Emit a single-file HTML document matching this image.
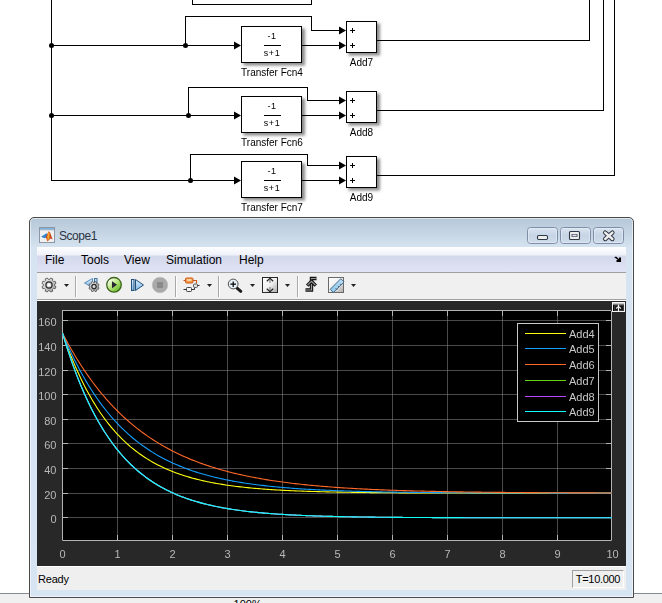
<!DOCTYPE html>
<html><head><meta charset="utf-8"><style>
html,body{margin:0;padding:0;width:662px;height:603px;overflow:hidden;background:#fff;font-family:"Liberation Sans",sans-serif;position:relative}
.a{position:absolute}
.m{position:absolute;top:253px;font-size:12px;line-height:14px;color:#000;white-space:pre}
</style></head><body>
<svg width="662" height="217" style="position:absolute;left:0;top:0;will-change:transform">
<defs><filter id="sh" x="-20%" y="-20%" width="150%" height="150%"><feGaussianBlur stdDeviation="1.8"/></filter></defs>
<rect x="243.5" y="28.5" width="61.5" height="37" fill="#8a8a8a" filter="url(#sh)"/><rect x="243.5" y="98.5" width="61.5" height="37" fill="#8a8a8a" filter="url(#sh)"/><rect x="243.5" y="163.5" width="61.5" height="37" fill="#8a8a8a" filter="url(#sh)"/><rect x="348.5" y="23.5" width="31.5" height="32" fill="#8a8a8a" filter="url(#sh)"/><rect x="348.5" y="93.5" width="31.5" height="32" fill="#8a8a8a" filter="url(#sh)"/><rect x="348.5" y="158.5" width="31.5" height="32" fill="#8a8a8a" filter="url(#sh)"/>
<g stroke="#000" stroke-width="1" shape-rendering="crispEdges"><line x1="51.5" y1="0" x2="51.5" y2="181"/><line x1="51" y1="45.5" x2="235" y2="45.5"/><line x1="185.5" y1="16" x2="185.5" y2="45"/><line x1="185" y1="16.5" x2="312" y2="16.5"/><line x1="311.5" y1="16" x2="311.5" y2="31"/><line x1="311" y1="30.5" x2="340" y2="30.5"/><line x1="301" y1="45.5" x2="340" y2="45.5"/><line x1="376" y1="40.5" x2="590" y2="40.5"/><line x1="589.5" y1="0" x2="589.5" y2="41"/><line x1="51" y1="115.5" x2="235" y2="115.5"/><line x1="188.5" y1="87" x2="188.5" y2="115"/><line x1="188" y1="87.5" x2="308" y2="87.5"/><line x1="307.5" y1="87" x2="307.5" y2="101"/><line x1="307" y1="100.5" x2="340" y2="100.5"/><line x1="301" y1="115.5" x2="340" y2="115.5"/><line x1="376" y1="110.5" x2="604" y2="110.5"/><line x1="603.5" y1="0" x2="603.5" y2="111"/><line x1="51" y1="180.5" x2="235" y2="180.5"/><line x1="190.5" y1="154" x2="190.5" y2="180"/><line x1="190" y1="154.5" x2="308" y2="154.5"/><line x1="307.5" y1="154" x2="307.5" y2="166"/><line x1="307" y1="165.5" x2="340" y2="165.5"/><line x1="301" y1="180.5" x2="340" y2="180.5"/><line x1="376" y1="175.5" x2="615" y2="175.5"/><line x1="614.5" y1="0" x2="614.5" y2="176"/></g>
<path d="M234 41.5 L241 45.5 L234 49.5 Z" fill="#000"/><path d="M339 26.5 L346 30.5 L339 34.5 Z" fill="#000"/><path d="M339 41.5 L346 45.5 L339 49.5 Z" fill="#000"/><circle cx="185.5" cy="45.5" r="2.5" fill="#000"/><path d="M234 111.5 L241 115.5 L234 119.5 Z" fill="#000"/><path d="M339 96.5 L346 100.5 L339 104.5 Z" fill="#000"/><path d="M339 111.5 L346 115.5 L339 119.5 Z" fill="#000"/><circle cx="188.5" cy="115.5" r="2.5" fill="#000"/><circle cx="51.5" cy="115.5" r="2.5" fill="#000"/><path d="M234 176.5 L241 180.5 L234 184.5 Z" fill="#000"/><path d="M339 161.5 L346 165.5 L339 169.5 Z" fill="#000"/><path d="M339 176.5 L346 180.5 L339 184.5 Z" fill="#000"/><circle cx="190.5" cy="180.5" r="2.5" fill="#000"/><circle cx="51.5" cy="45.5" r="2.5" fill="#000"/><rect x="192.5" y="-10" width="119" height="14.5" fill="none" stroke="#000"/>
<g font-family="Liberation Sans" fill="#000">
<rect x="241.5" y="26.5" width="60" height="36" fill="#fff" stroke="#000" stroke-width="1"/>
<text x="272" y="39.2" text-anchor="middle" font-size="9" letter-spacing="0.6">-1</text>
<line x1="264" y1="45.5" x2="281" y2="45.5" stroke="#000"/>
<text x="272" y="56.2" text-anchor="middle" font-size="9" letter-spacing="0.6">s+1</text>
<text x="272" y="76" text-anchor="middle" font-size="10">Transfer Fcn4</text>
<rect x="241.5" y="96.5" width="60" height="36" fill="#fff" stroke="#000" stroke-width="1"/>
<text x="272" y="109.2" text-anchor="middle" font-size="9" letter-spacing="0.6">-1</text>
<line x1="264" y1="115.5" x2="281" y2="115.5" stroke="#000"/>
<text x="272" y="126.2" text-anchor="middle" font-size="9" letter-spacing="0.6">s+1</text>
<text x="272" y="146" text-anchor="middle" font-size="10">Transfer Fcn6</text>
<rect x="241.5" y="161.5" width="60" height="36" fill="#fff" stroke="#000" stroke-width="1"/>
<text x="272" y="174.2" text-anchor="middle" font-size="9" letter-spacing="0.6">-1</text>
<line x1="264" y1="180.5" x2="281" y2="180.5" stroke="#000"/>
<text x="272" y="191.2" text-anchor="middle" font-size="9" letter-spacing="0.6">s+1</text>
<text x="272" y="211" text-anchor="middle" font-size="10">Transfer Fcn7</text>
<rect x="346.5" y="21.5" width="30" height="31" fill="#fff" stroke="#000" stroke-width="1"/>
<path d="M350 30.5 H355 M352.5 28 V33 M350 45.5 H355 M352.5 43 V48" stroke="#000" stroke-width="1"/>
<text x="361.5" y="65.5" text-anchor="middle" font-size="10">Add7</text>
<rect x="346.5" y="91.5" width="30" height="31" fill="#fff" stroke="#000" stroke-width="1"/>
<path d="M350 100.5 H355 M352.5 98 V103 M350 115.5 H355 M352.5 113 V118" stroke="#000" stroke-width="1"/>
<text x="361.5" y="135.5" text-anchor="middle" font-size="10">Add8</text>
<rect x="346.5" y="156.5" width="30" height="31" fill="#fff" stroke="#000" stroke-width="1"/>
<path d="M350 165.5 H355 M352.5 163 V168 M350 180.5 H355 M352.5 178 V183" stroke="#000" stroke-width="1"/>
<text x="361.5" y="200.5" text-anchor="middle" font-size="10">Add9</text></g>
</svg>
<div class="a" style="left:0;top:593px;width:662px;height:10px;background:#f0f0f0;border-top:1px solid #838a96;box-sizing:border-box"></div>
<div class="a" style="left:233.6px;top:598.4px;font-size:11px;line-height:12px;color:#000">100%</div>
<div class="a" style="left:29px;top:217px;width:605px;height:381px;box-sizing:border-box;border:1px solid #4a4a4a;border-radius:5px 5px 0 0;background:linear-gradient(#b6c8d9 1px,#c6d5e3 15px,#d6e4f1 30px,#d7e4f2);box-shadow:inset 0 0 0 1px rgba(255,255,255,0.55)"></div>
<div class="a" style="left:59px;top:228.4px;font-size:12px;line-height:16px;color:#2a3445;letter-spacing:-0.45px">Scope1</div>
<div class="a" style="left:37px;top:247px;width:589px;height:25px;background:linear-gradient(#fdfeff 0,#f0f2f9 8px,#d4d8eb 9px,#dfe3f4)"></div>
<div class="a" style="left:37px;top:272px;width:589px;height:1px;background:#a0a0a0"></div>
<div class="a" style="left:37px;top:273px;width:589px;height:26px;background:#f0f0f0"></div>
<div class="a" style="left:37px;top:299px;width:589px;height:1px;background:#a0a0a0"></div><div class="a" style="left:37px;top:300px;width:589px;height:1px;background:#fff"></div>
<div class="a" style="left:37px;top:566px;width:589px;height:24px;background:#efefef;border-top:1px solid #fff;box-sizing:border-box"></div>
<div class="a" style="left:38px;top:573px;font-size:11px;line-height:13px;color:#000;letter-spacing:-0.2px">Ready</div>
<div class="a" style="left:572px;top:570px;width:52px;height:18px;box-sizing:border-box;border:1px solid #fff;border-top-color:#a0a0a0;border-left-color:#a0a0a0;background:#efefef;font-size:11px;line-height:16px;text-align:center;color:#000;letter-spacing:-0.3px">T=10.000</div>
<div class="m" style="left:45px">File</div>
<div class="m" style="left:81px">Tools</div>
<div class="m" style="left:124px">View</div>
<div class="m" style="left:166px">Simulation</div>
<div class="m" style="left:239px">Help</div>
<svg width="662" height="603" style="position:absolute;left:0;top:0">
<defs>
<linearGradient id="gearg" x1="0" y1="0" x2="1" y2="1"><stop offset="0" stop-color="#f4f4f4"/><stop offset="1" stop-color="#9a9a9a"/></linearGradient>
<linearGradient id="playg" x1="0.15" y1="0.1" x2="0.85" y2="0.9"><stop offset="0" stop-color="#ffffff"/><stop offset="0.5" stop-color="#b6e57a"/><stop offset="1" stop-color="#62b82a"/></linearGradient>
<linearGradient id="bluef" x1="0" y1="0" x2="0" y2="1"><stop offset="0" stop-color="#d8ecfb"/><stop offset="1" stop-color="#7fb6e4"/></linearGradient>
<linearGradient id="boxg" x1="0" y1="0" x2="1" y2="1"><stop offset="0" stop-color="#ffffff"/><stop offset="0.5" stop-color="#f0f0f0"/><stop offset="1" stop-color="#a8a8a8"/></linearGradient>
<linearGradient id="tbbtn" x1="0" y1="0" x2="0" y2="1"><stop offset="0" stop-color="#dbe5f1"/><stop offset="0.5" stop-color="#c6d4e5"/><stop offset="1" stop-color="#cfdcea"/></linearGradient>
<linearGradient id="rulg" x1="0" y1="0" x2="1" y2="0"><stop offset="0" stop-color="#8cc6ec"/><stop offset="1" stop-color="#bfe0f6"/></linearGradient>
</defs>
<!-- title bar buttons -->
<rect x="527.5" y="227.5" width="30" height="16" rx="3" fill="url(#tbbtn)" stroke="#7f8ea8" stroke-width="1"/>
<rect x="528.5" y="228.5" width="28" height="14" rx="2" fill="none" stroke="#e6eef7" stroke-width="0.8" opacity="0.8"/>
<rect x="537.5" y="235.5" width="10" height="4" rx="1.2" fill="#eeeeee" stroke="#2f3645" stroke-width="1.1"/>
<rect x="560.5" y="227.5" width="30" height="16" rx="3" fill="url(#tbbtn)" stroke="#7f8ea8" stroke-width="1"/>
<rect x="561.5" y="228.5" width="28" height="14" rx="2" fill="none" stroke="#e6eef7" stroke-width="0.8" opacity="0.8"/>
<rect x="569.5" y="231.5" width="10" height="8" rx="1" fill="#eeeeee" stroke="#2f3645" stroke-width="1.1"/>
<rect x="571.5" y="234" width="6" height="3" fill="#55607a"/>
<rect x="572.5" y="234.8" width="4" height="1.4" fill="#e8e8e8"/>
<rect x="593.5" y="227.5" width="30" height="16" rx="3" fill="url(#tbbtn)" stroke="#7f8ea8" stroke-width="1"/>
<rect x="594.5" y="228.5" width="28" height="14" rx="2" fill="none" stroke="#e6eef7" stroke-width="0.8" opacity="0.8"/>
<path d="M605.2 232.6 L612.4 239 M612.4 232.6 L605.2 239" stroke="#2f3645" stroke-width="4.4" stroke-linecap="round"/>
<path d="M605.2 232.6 L612.4 239 M612.4 232.6 L605.2 239" stroke="#eeeeee" stroke-width="2.4" stroke-linecap="round"/>
<!-- matlab icon -->
<rect x="39.5" y="227.5" width="15" height="15" fill="#f0f0f0" stroke="#8d97a3" stroke-width="1"/>
<rect x="40" y="228" width="14" height="1.6" fill="#7db4e6"/>
<rect x="40" y="229.6" width="14" height="0.6" fill="#8d97a3"/>
<path d="M41 236.8 L46.5 233.2 L48.8 236.5 L44.5 238.3 Z" fill="#3583cc"/>
<path d="M45.8 237 L48.6 231.2 L50.2 232.8 L52.6 239.6 L50.6 238.6 L47.4 241.4 Z" fill="#c9431d"/>
<path d="M48.4 231.6 L49.6 233.4 L49.4 238.2 L47.6 241 L47.2 236.6 Z" fill="#f4a827"/>
<!-- menubar arrow -->
<path d="M614 257.5 L616 256.5 L619 259 L619 257.5 L621 257.5 L621 262 L616.5 262 L616.5 260 L618 260 L615 257.8 Z" fill="#000"/>
<!-- toolbar -->
<polygon points="54.70,285.81 56.00,286.68 55.14,288.76 53.61,288.46 52.46,289.61 52.76,291.14 50.68,292.00 49.81,290.70 48.19,290.70 47.32,292.00 45.24,291.14 45.54,289.61 44.39,288.46 42.86,288.76 42.00,286.68 43.30,285.81 43.30,284.19 42.00,283.32 42.86,281.24 44.39,281.54 45.54,280.39 45.24,278.86 47.32,278.00 48.19,279.30 49.81,279.30 50.68,278.00 52.76,278.86 52.46,280.39 53.61,281.54 55.14,281.24 56.00,283.32 54.70,284.19" fill="url(#gearg)" stroke="#4a4a4a" stroke-width="0.8" stroke-linejoin="round"/><circle cx="49" cy="285" r="3.1" fill="none" stroke="#2a2a2a" stroke-width="1.2"/><circle cx="49" cy="285" r="1.7" fill="#fff"/>
<path d="M64 284 H69 L66.5 287 Z" fill="#222"/>
<rect x="75" y="276" width="1" height="21" fill="#a8a8a8"/><rect x="76" y="276" width="1" height="21" fill="#fff"/>
<path d="M84.5 283 L92.5 278.5 L92.5 287.5 Z" fill="url(#bluef)" stroke="#5d8fc0" stroke-width="1"/>
<rect x="94.5" y="278.5" width="2.5" height="6" fill="url(#bluef)" stroke="#3d6f9f" stroke-width="1"/>
<polygon points="98.12,287.19 99.06,287.81 98.43,289.32 97.33,289.10 96.50,289.93 96.72,291.03 95.21,291.66 94.59,290.72 93.41,290.72 92.79,291.66 91.28,291.03 91.50,289.93 90.67,289.10 89.57,289.32 88.94,287.81 89.88,287.19 89.88,286.01 88.94,285.39 89.57,283.88 90.67,284.10 91.50,283.27 91.28,282.17 92.79,281.54 93.41,282.48 94.59,282.48 95.21,281.54 96.72,282.17 96.50,283.27 97.33,284.10 98.43,283.88 99.06,285.39 98.12,286.01" fill="url(#gearg)" stroke="#4a4a4a" stroke-width="0.8" stroke-linejoin="round"/><circle cx="94" cy="286.6" r="2.2" fill="none" stroke="#2a2a2a" stroke-width="1.2"/><circle cx="94" cy="286.6" r="1.0" fill="#ddd"/>
<circle cx="114" cy="284.8" r="7.3" fill="url(#playg)" stroke="#3d6419" stroke-width="1.3"/>
<path d="M112 281.3 L117 284.8 L112 288.3 Z" fill="#262630"/>
<rect x="131.5" y="279.5" width="2.5" height="11" fill="url(#bluef)" stroke="#1f4f7a" stroke-width="1"/>
<path d="M135.5 279.5 L143.5 285 L135.5 290.5 Z" fill="url(#bluef)" stroke="#1f4f7a" stroke-width="1"/>
<circle cx="160" cy="285" r="7.8" fill="#a9a9a9" stroke="#bcbcbc" stroke-width="0.6"/>
<rect x="157" y="282" width="6" height="6" fill="#8a8a8a"/>
<rect x="175" y="276" width="1" height="21" fill="#a8a8a8"/><rect x="176" y="276" width="1" height="21" fill="#fff"/>
<path d="M183.5 280.5 H186 M192.5 280.5 H196.5 V283.5" stroke="#c8581a" stroke-width="1.1" fill="none"/>
<rect x="185.5" y="278" width="7.5" height="5" rx="1" fill="#f39a4a" stroke="#cf5a17" stroke-width="1"/>
<rect x="187" y="279" width="4.5" height="2" fill="#fbd2a0"/>
<path d="M183.5 289.5 H186.5 M191.5 289.5 H194.5 V287.5 M197.5 285.5 H199.5" stroke="#333" stroke-width="1" fill="none"/>
<rect x="186.5" y="287.5" width="5" height="4" rx="0.8" fill="#f4f4f4" stroke="#444" stroke-width="1"/>
<rect x="193.5" y="284" width="4" height="3.4" rx="1" fill="#e8e8e8" stroke="#555" stroke-width="1"/>
<path d="M207 284 H212 L209.5 287 Z" fill="#222"/>
<rect x="218" y="276" width="1" height="21" fill="#a8a8a8"/><rect x="219" y="276" width="1" height="21" fill="#fff"/>
<path d="M236.8 287.8 L240.8 291.3" stroke="#1a1a1a" stroke-width="3" stroke-linecap="round"/>
<circle cx="233.2" cy="284" r="4.9" fill="#e8f0f8" stroke="#505050" stroke-width="1"/>
<path d="M230.4 284.2 H236 M233.2 281.4 V287" stroke="#000" stroke-width="1.2"/>
<path d="M250 284 H255 L252.5 287 Z" fill="#222"/>
<rect x="262.5" y="277.5" width="15" height="15" fill="url(#boxg)" stroke="#2a2a2a" stroke-width="1"/>
<path d="M270 279.5 V283" stroke="#9a9a9a" stroke-width="1.6"/><path d="M270 287 V290.5" stroke="#9a9a9a" stroke-width="1.6"/>
<path d="M266.8 281.2 L270 278.4 L273.2 281.2 M266.8 288.8 L270 291.6 L273.2 288.8" stroke="#222" stroke-width="1.2" fill="none"/>
<path d="M285 284 H290 L287.5 287 Z" fill="#222"/>
<rect x="297" y="276" width="1" height="21" fill="#a8a8a8"/><rect x="298" y="276" width="1" height="21" fill="#fff"/>
<path d="M305.5 290 H311.5 V278.5 H316.5" stroke="#111" stroke-width="3.4" fill="none" stroke-linejoin="miter"/>
<path d="M305.5 290 H311.5 V278.5 H316.5" stroke="#9a9a9a" stroke-width="1.2" fill="none"/>
<path d="M307.2 285.6 L311.5 281.3 L315.8 285.6" stroke="#111" stroke-width="3.4" fill="none"/>
<path d="M307.6 285.2 L311.5 281.3 L315.4 285.2" stroke="#9a9a9a" stroke-width="1.2" fill="none"/>
<rect x="328.5" y="277.5" width="15" height="15" fill="url(#boxg)" stroke="#6a6a6a" stroke-width="1"/>
<path d="M330.2 289.3 L340.8 278.7 L344 281.9 L333.4 292.5 Z" fill="url(#rulg)" stroke="#3c5f7d" stroke-width="0.9"/>
<path d="M335.6 288.2 L336.8 289.4 M337.8 286 L339 287.2 M340 283.8 L341.2 285" stroke="#2c4f6d" stroke-width="0.9"/>
<path d="M351 284 H356 L353.5 287 Z" fill="#222"/>
<!-- undock -->
</svg>
<svg width="662" height="603" style="position:absolute;left:0;top:0;will-change:transform">
<rect x="37" y="301" width="589" height="265" fill="#282828"/>
<rect x="62" y="310" width="550" height="231" fill="#000"/>
<g stroke="#848484" stroke-opacity="0.56" stroke-width="1"><line x1="117.5" y1="311" x2="117.5" y2="540" /><line x1="172.5" y1="311" x2="172.5" y2="540" /><line x1="227.5" y1="311" x2="227.5" y2="540" /><line x1="282.5" y1="311" x2="282.5" y2="540" /><line x1="337.5" y1="311" x2="337.5" y2="540" /><line x1="392.5" y1="311" x2="392.5" y2="540" /><line x1="447.5" y1="311" x2="447.5" y2="540" /><line x1="502.5" y1="311" x2="502.5" y2="540" /><line x1="557.5" y1="311" x2="557.5" y2="540" /><line x1="63" y1="517.5" x2="611" y2="517.5" /><line x1="63" y1="493.5" x2="611" y2="493.5" /><line x1="63" y1="468.5" x2="611" y2="468.5" /><line x1="63" y1="443.5" x2="611" y2="443.5" /><line x1="63" y1="419.5" x2="611" y2="419.5" /><line x1="63" y1="394.5" x2="611" y2="394.5" /><line x1="63" y1="370.5" x2="611" y2="370.5" /><line x1="63" y1="345.5" x2="611" y2="345.5" /><line x1="63" y1="320.5" x2="611" y2="320.5" /></g>
<g stroke="#b4b4b4" stroke-width="1"><line x1="117.5" y1="535" x2="117.5" y2="540" /><line x1="117.5" y1="311" x2="117.5" y2="316" /><line x1="172.5" y1="535" x2="172.5" y2="540" /><line x1="172.5" y1="311" x2="172.5" y2="316" /><line x1="227.5" y1="535" x2="227.5" y2="540" /><line x1="227.5" y1="311" x2="227.5" y2="316" /><line x1="282.5" y1="535" x2="282.5" y2="540" /><line x1="282.5" y1="311" x2="282.5" y2="316" /><line x1="337.5" y1="535" x2="337.5" y2="540" /><line x1="337.5" y1="311" x2="337.5" y2="316" /><line x1="392.5" y1="535" x2="392.5" y2="540" /><line x1="392.5" y1="311" x2="392.5" y2="316" /><line x1="447.5" y1="535" x2="447.5" y2="540" /><line x1="447.5" y1="311" x2="447.5" y2="316" /><line x1="502.5" y1="535" x2="502.5" y2="540" /><line x1="502.5" y1="311" x2="502.5" y2="316" /><line x1="557.5" y1="535" x2="557.5" y2="540" /><line x1="557.5" y1="311" x2="557.5" y2="316" /><line x1="63" y1="517.5" x2="68" y2="517.5" /><line x1="606" y1="517.5" x2="611" y2="517.5" /><line x1="63" y1="493.5" x2="68" y2="493.5" /><line x1="606" y1="493.5" x2="611" y2="493.5" /><line x1="63" y1="468.5" x2="68" y2="468.5" /><line x1="606" y1="468.5" x2="611" y2="468.5" /><line x1="63" y1="443.5" x2="68" y2="443.5" /><line x1="606" y1="443.5" x2="611" y2="443.5" /><line x1="63" y1="419.5" x2="68" y2="419.5" /><line x1="606" y1="419.5" x2="611" y2="419.5" /><line x1="63" y1="394.5" x2="68" y2="394.5" /><line x1="606" y1="394.5" x2="611" y2="394.5" /><line x1="63" y1="370.5" x2="68" y2="370.5" /><line x1="606" y1="370.5" x2="611" y2="370.5" /><line x1="63" y1="345.5" x2="68" y2="345.5" /><line x1="606" y1="345.5" x2="611" y2="345.5" /><line x1="63" y1="320.5" x2="68" y2="320.5" /><line x1="606" y1="320.5" x2="611" y2="320.5" /></g>
<path d="M62.5 310 V540.5 H611.5 V311 M62 310.5 H611" fill="none" stroke="#b4b4b4" stroke-width="1"/><rect x="611" y="310" width="1" height="1" fill="#282828"/>
<g font-family="Liberation Sans" font-size="11" fill="#b8b8b8"><text x="56.5" y="523.3" text-anchor="end">0</text><text x="56.5" y="498.7" text-anchor="end">20</text><text x="56.5" y="474.0" text-anchor="end">40</text><text x="56.5" y="449.4" text-anchor="end">60</text><text x="56.5" y="424.8" text-anchor="end">80</text><text x="56.5" y="400.2" text-anchor="end">100</text><text x="56.5" y="375.5" text-anchor="end">120</text><text x="56.5" y="350.9" text-anchor="end">140</text><text x="56.5" y="326.3" text-anchor="end">160</text><text x="62.5" y="558" text-anchor="middle">0</text><text x="117.5" y="558" text-anchor="middle">1</text><text x="172.5" y="558" text-anchor="middle">2</text><text x="227.5" y="558" text-anchor="middle">3</text><text x="282.5" y="558" text-anchor="middle">4</text><text x="337.5" y="558" text-anchor="middle">5</text><text x="392.5" y="558" text-anchor="middle">6</text><text x="447.5" y="558" text-anchor="middle">7</text><text x="502.5" y="558" text-anchor="middle">8</text><text x="557.5" y="558" text-anchor="middle">9</text><text x="612.5" y="558" text-anchor="middle">10</text></g>
<g clip-path="url(#axclip)"><polyline fill="none" stroke="#ffff11" stroke-width="1.1" points="62.50,333.11 64.33,338.36 66.17,343.44 68.00,348.34 69.83,353.09 71.67,357.69 73.50,362.13 75.33,366.42 77.17,370.58 79.00,374.60 80.83,378.49 82.67,382.25 84.50,385.88 86.33,389.40 88.17,392.80 90.00,396.09 91.83,399.27 93.67,402.35 95.50,405.33 97.33,408.21 99.17,411.00 101.00,413.69 102.83,416.30 104.67,418.82 106.50,421.25 108.33,423.61 110.17,425.89 112.00,428.10 113.83,430.23 115.67,432.30 117.50,434.29 119.33,436.22 121.17,438.09 123.00,439.89 124.83,441.64 126.67,443.33 128.50,444.97 130.33,446.55 132.17,448.07 134.00,449.55 135.83,450.98 137.67,452.37 139.50,453.70 141.33,455.00 143.17,456.25 145.00,457.46 146.83,458.63 148.67,459.76 150.50,460.86 152.33,461.92 154.17,462.94 156.00,463.93 157.83,464.89 159.67,465.82 161.50,466.72 163.33,467.58 165.17,468.42 167.00,469.23 168.83,470.02 170.67,470.78 172.50,471.51 174.33,472.22 176.17,472.91 178.00,473.57 179.83,474.22 181.67,474.84 183.50,475.44 185.33,476.02 187.17,476.58 189.00,477.13 190.83,477.65 192.67,478.16 194.50,478.65 196.33,479.13 198.17,479.59 200.00,480.04 201.83,480.47 203.67,480.88 205.50,481.29 207.33,481.68 209.17,482.05 211.00,482.42 212.83,482.77 214.67,483.11 216.50,483.44 218.33,483.76 220.17,484.07 222.00,484.37 223.83,484.66 225.67,484.94 227.50,485.21 229.33,485.47 231.17,485.72 233.00,485.96 234.83,486.20 236.67,486.43 238.50,486.65 240.33,486.86 242.17,487.07 244.00,487.27 245.83,487.46 247.67,487.65 249.50,487.83 251.33,488.01 253.17,488.18 255.00,488.34 256.83,488.50 258.67,488.65 260.50,488.80 262.33,488.94 264.17,489.08 266.00,489.22 267.83,489.35 269.67,489.47 271.50,489.59 273.33,489.71 275.17,489.83 277.00,489.94 278.83,490.04 280.67,490.14 282.50,490.24 284.33,490.34 286.17,490.43 288.00,490.52 289.83,490.61 291.67,490.69 293.50,490.77 295.33,490.85 297.17,490.93 299.00,491.00 300.83,491.07 302.67,491.14 304.50,491.21 306.33,491.27 308.17,491.34 310.00,491.40 311.83,491.46 313.67,491.51 315.50,491.57 317.33,491.62 319.17,491.67 321.00,491.72 322.83,491.77 324.67,491.81 326.50,491.86 328.33,491.90 330.17,491.94 332.00,491.98 333.83,492.02 335.67,492.06 337.50,492.10 339.33,492.13 341.17,492.17 343.00,492.20 344.83,492.23 346.67,492.26 348.50,492.29 350.33,492.32 352.17,492.35 354.00,492.38 355.83,492.40 357.67,492.43 359.50,492.45 361.33,492.48 363.17,492.50 365.00,492.52 366.83,492.54 368.67,492.56 370.50,492.58 372.33,492.60 374.17,492.62 376.00,492.64 377.83,492.66 379.67,492.67 381.50,492.69 383.33,492.71 385.17,492.72 387.00,492.74 388.83,492.75 390.67,492.76 392.50,492.78 394.33,492.79 396.17,492.80 398.00,492.82 399.83,492.83 401.67,492.84 403.50,492.85 405.33,492.86 407.17,492.87 409.00,492.88 410.83,492.89 412.67,492.90 414.50,492.91 416.33,492.92 418.17,492.93 420.00,492.93 421.83,492.94 423.67,492.95 425.50,492.96 427.33,492.96 429.17,492.97 431.00,492.98 432.83,492.98 434.67,492.99 436.50,493.00 438.33,493.00 440.17,493.01 442.00,493.01 443.83,493.02 445.67,493.02 447.50,493.03 449.33,493.03 451.17,493.04 453.00,493.04 454.83,493.05 456.67,493.05 458.50,493.06 460.33,493.06 462.17,493.06 464.00,493.07 465.83,493.07 467.67,493.07 469.50,493.08 471.33,493.08 473.17,493.08 475.00,493.09 476.83,493.09 478.67,493.09 480.50,493.09 482.33,493.10 484.17,493.10 486.00,493.10 487.83,493.10 489.67,493.11 491.50,493.11 493.33,493.11 495.17,493.11 497.00,493.12 498.83,493.12 500.67,493.12 502.50,493.12 504.33,493.12 506.17,493.12 508.00,493.13 509.83,493.13 511.67,493.13 513.50,493.13 515.33,493.13 517.17,493.13 519.00,493.14 520.83,493.14 522.67,493.14 524.50,493.14 526.33,493.14 528.17,493.14 530.00,493.14 531.83,493.14 533.67,493.14 535.50,493.15 537.33,493.15 539.17,493.15 541.00,493.15 542.83,493.15 544.67,493.15 546.50,493.15 548.33,493.15 550.17,493.15 552.00,493.15 553.83,493.15 555.67,493.15 557.50,493.16 559.33,493.16 561.17,493.16 563.00,493.16 564.83,493.16 566.67,493.16 568.50,493.16 570.33,493.16 572.17,493.16 574.00,493.16 575.83,493.16 577.67,493.16 579.50,493.16 581.33,493.16 583.17,493.16 585.00,493.16 586.83,493.16 588.67,493.16 590.50,493.16 592.33,493.16 594.17,493.16 596.00,493.17 597.83,493.17 599.67,493.17 601.50,493.17 603.33,493.17 605.17,493.17 607.00,493.17 608.83,493.17 610.67,493.17 612.50,493.17"/>
<polyline fill="none" stroke="#139fff" stroke-width="1.1" points="62.50,333.11 64.33,337.50 66.17,341.76 68.00,345.91 69.83,349.94 71.67,353.87 73.50,357.69 75.33,361.40 77.17,365.01 79.00,368.52 80.83,371.93 82.67,375.25 84.50,378.49 86.33,381.63 88.17,384.68 90.00,387.66 91.83,390.55 93.67,393.36 95.50,396.09 97.33,398.75 99.17,401.34 101.00,403.85 102.83,406.30 104.67,408.68 106.50,411.00 108.33,413.25 110.17,415.44 112.00,417.57 113.83,419.64 115.67,421.65 117.50,423.61 119.33,425.52 121.17,427.37 123.00,429.17 124.83,430.93 126.67,432.63 128.50,434.29 130.33,435.90 132.17,437.47 134.00,439.00 135.83,440.48 137.67,441.93 139.50,443.33 141.33,444.70 143.17,446.02 145.00,447.32 146.83,448.57 148.67,449.79 150.50,450.98 152.33,452.14 154.17,453.26 156.00,454.36 157.83,455.42 159.67,456.45 161.50,457.46 163.33,458.44 165.17,459.39 167.00,460.32 168.83,461.22 170.67,462.09 172.50,462.94 174.33,463.77 176.17,464.58 178.00,465.36 179.83,466.12 181.67,466.86 183.50,467.58 185.33,468.29 187.17,468.97 189.00,469.63 190.83,470.28 192.67,470.90 194.50,471.51 196.33,472.11 198.17,472.68 200.00,473.24 201.83,473.79 203.67,474.32 205.50,474.84 207.33,475.34 209.17,475.83 211.00,476.30 212.83,476.77 214.67,477.22 216.50,477.65 218.33,478.08 220.17,478.49 222.00,478.89 223.83,479.29 225.67,479.67 227.50,480.04 229.33,480.40 231.17,480.75 233.00,481.09 234.83,481.42 236.67,481.74 238.50,482.05 240.33,482.36 242.17,482.65 244.00,482.94 245.83,483.22 247.67,483.50 249.50,483.76 251.33,484.02 253.17,484.27 255.00,484.51 256.83,484.75 258.67,484.98 260.50,485.21 262.33,485.42 264.17,485.64 266.00,485.84 267.83,486.04 269.67,486.24 271.50,486.43 273.33,486.61 275.17,486.79 277.00,486.97 278.83,487.14 280.67,487.30 282.50,487.46 284.33,487.62 286.17,487.77 288.00,487.92 289.83,488.07 291.67,488.21 293.50,488.34 295.33,488.47 297.17,488.60 299.00,488.73 300.83,488.85 302.67,488.97 304.50,489.08 306.33,489.20 308.17,489.30 310.00,489.41 311.83,489.51 313.67,489.61 315.50,489.71 317.33,489.81 319.17,489.90 321.00,489.99 322.83,490.08 324.67,490.16 326.50,490.24 328.33,490.32 330.17,490.40 332.00,490.48 333.83,490.55 335.67,490.62 337.50,490.69 339.33,490.76 341.17,490.83 343.00,490.89 344.83,490.95 346.67,491.02 348.50,491.07 350.33,491.13 352.17,491.19 354.00,491.24 355.83,491.30 357.67,491.35 359.50,491.40 361.33,491.45 363.17,491.49 365.00,491.54 366.83,491.58 368.67,491.63 370.50,491.67 372.33,491.71 374.17,491.75 376.00,491.79 377.83,491.83 379.67,491.87 381.50,491.90 383.33,491.94 385.17,491.97 387.00,492.00 388.83,492.03 390.67,492.07 392.50,492.10 394.33,492.13 396.17,492.15 398.00,492.18 399.83,492.21 401.67,492.24 403.50,492.26 405.33,492.29 407.17,492.31 409.00,492.34 410.83,492.36 412.67,492.38 414.50,492.40 416.33,492.42 418.17,492.44 420.00,492.46 421.83,492.48 423.67,492.50 425.50,492.52 427.33,492.54 429.17,492.56 431.00,492.57 432.83,492.59 434.67,492.61 436.50,492.62 438.33,492.64 440.17,492.65 442.00,492.67 443.83,492.68 445.67,492.69 447.50,492.71 449.33,492.72 451.17,492.73 453.00,492.74 454.83,492.76 456.67,492.77 458.50,492.78 460.33,492.79 462.17,492.80 464.00,492.81 465.83,492.82 467.67,492.83 469.50,492.84 471.33,492.85 473.17,492.86 475.00,492.87 476.83,492.87 478.67,492.88 480.50,492.89 482.33,492.90 484.17,492.91 486.00,492.91 487.83,492.92 489.67,492.93 491.50,492.93 493.33,492.94 495.17,492.95 497.00,492.95 498.83,492.96 500.67,492.97 502.50,492.97 504.33,492.98 506.17,492.98 508.00,492.99 509.83,492.99 511.67,493.00 513.50,493.00 515.33,493.01 517.17,493.01 519.00,493.02 520.83,493.02 522.67,493.02 524.50,493.03 526.33,493.03 528.17,493.04 530.00,493.04 531.83,493.04 533.67,493.05 535.50,493.05 537.33,493.05 539.17,493.06 541.00,493.06 542.83,493.06 544.67,493.07 546.50,493.07 548.33,493.07 550.17,493.08 552.00,493.08 553.83,493.08 555.67,493.08 557.50,493.09 559.33,493.09 561.17,493.09 563.00,493.09 564.83,493.10 566.67,493.10 568.50,493.10 570.33,493.10 572.17,493.10 574.00,493.11 575.83,493.11 577.67,493.11 579.50,493.11 581.33,493.11 583.17,493.11 585.00,493.12 586.83,493.12 588.67,493.12 590.50,493.12 592.33,493.12 594.17,493.12 596.00,493.13 597.83,493.13 599.67,493.13 601.50,493.13 603.33,493.13 605.17,493.13 607.00,493.13 608.83,493.13 610.67,493.14 612.50,493.14"/>
<polyline fill="none" stroke="#ff6929" stroke-width="1.1" points="62.50,333.11 64.33,336.63 66.17,340.07 68.00,343.44 69.83,346.73 71.67,349.94 73.50,353.09 75.33,356.17 77.17,359.18 79.00,362.13 80.83,365.01 82.67,367.82 84.50,370.58 86.33,373.27 88.17,375.91 90.00,378.49 91.83,381.01 93.67,383.47 95.50,385.88 97.33,388.24 99.17,390.55 101.00,392.80 102.83,395.01 104.67,397.16 106.50,399.27 108.33,401.34 110.17,403.36 112.00,405.33 113.83,407.26 115.67,409.15 117.50,411.00 119.33,412.80 121.17,414.57 123.00,416.30 124.83,417.99 126.67,419.64 128.50,421.25 130.33,422.83 132.17,424.38 134.00,425.89 135.83,427.37 137.67,428.82 139.50,430.23 141.33,431.62 143.17,432.97 145.00,434.29 146.83,435.59 148.67,436.85 150.50,438.09 152.33,439.30 154.17,440.48 156.00,441.64 157.83,442.77 159.67,443.88 161.50,444.97 163.33,446.02 165.17,447.06 167.00,448.07 168.83,449.07 170.67,450.03 172.50,450.98 174.33,451.91 176.17,452.82 178.00,453.70 179.83,454.57 181.67,455.42 183.50,456.25 185.33,457.06 187.17,457.85 189.00,458.63 190.83,459.39 192.67,460.13 194.50,460.86 196.33,461.57 198.17,462.26 200.00,462.94 201.83,463.61 203.67,464.26 205.50,464.89 207.33,465.51 209.17,466.12 211.00,466.72 212.83,467.30 214.67,467.87 216.50,468.42 218.33,468.97 220.17,469.50 222.00,470.02 223.83,470.53 225.67,471.03 227.50,471.51 229.33,471.99 231.17,472.45 233.00,472.91 234.83,473.36 236.67,473.79 238.50,474.22 240.33,474.63 242.17,475.04 244.00,475.44 245.83,475.83 247.67,476.21 249.50,476.58 251.33,476.95 253.17,477.30 255.00,477.65 256.83,477.99 258.67,478.33 260.50,478.65 262.33,478.97 264.17,479.29 266.00,479.59 267.83,479.89 269.67,480.18 271.50,480.47 273.33,480.75 275.17,481.02 277.00,481.29 278.83,481.55 280.67,481.80 282.50,482.05 284.33,482.30 286.17,482.54 288.00,482.77 289.83,483.00 291.67,483.22 293.50,483.44 295.33,483.66 297.17,483.86 299.00,484.07 300.83,484.27 302.67,484.47 304.50,484.66 306.33,484.84 308.17,485.03 310.00,485.21 311.83,485.38 313.67,485.55 315.50,485.72 317.33,485.88 319.17,486.04 321.00,486.20 322.83,486.35 324.67,486.50 326.50,486.65 328.33,486.79 330.17,486.93 332.00,487.07 333.83,487.21 335.67,487.34 337.50,487.46 339.33,487.59 341.17,487.71 343.00,487.83 344.83,487.95 346.67,488.07 348.50,488.18 350.33,488.29 352.17,488.39 354.00,488.50 355.83,488.60 357.67,488.70 359.50,488.80 361.33,488.90 363.17,488.99 365.00,489.08 366.83,489.17 368.67,489.26 370.50,489.35 372.33,489.43 374.17,489.51 376.00,489.59 377.83,489.67 379.67,489.75 381.50,489.83 383.33,489.90 385.17,489.97 387.00,490.04 388.83,490.11 390.67,490.18 392.50,490.24 394.33,490.31 396.17,490.37 398.00,490.43 399.83,490.49 401.67,490.55 403.50,490.61 405.33,490.67 407.17,490.72 409.00,490.77 410.83,490.83 412.67,490.88 414.50,490.93 416.33,490.98 418.17,491.03 420.00,491.07 421.83,491.12 423.67,491.17 425.50,491.21 427.33,491.25 429.17,491.30 431.00,491.34 432.83,491.38 434.67,491.42 436.50,491.46 438.33,491.49 440.17,491.53 442.00,491.57 443.83,491.60 445.67,491.64 447.50,491.67 449.33,491.70 451.17,491.74 453.00,491.77 454.83,491.80 456.67,491.83 458.50,491.86 460.33,491.89 462.17,491.91 464.00,491.94 465.83,491.97 467.67,492.00 469.50,492.02 471.33,492.05 473.17,492.07 475.00,492.10 476.83,492.12 478.67,492.14 480.50,492.17 482.33,492.19 484.17,492.21 486.00,492.23 487.83,492.25 489.67,492.27 491.50,492.29 493.33,492.31 495.17,492.33 497.00,492.35 498.83,492.37 500.67,492.38 502.50,492.40 504.33,492.42 506.17,492.44 508.00,492.45 509.83,492.47 511.67,492.48 513.50,492.50 515.33,492.51 517.17,492.53 519.00,492.54 520.83,492.56 522.67,492.57 524.50,492.58 526.33,492.60 528.17,492.61 530.00,492.62 531.83,492.63 533.67,492.65 535.50,492.66 537.33,492.67 539.17,492.68 541.00,492.69 542.83,492.70 544.67,492.71 546.50,492.72 548.33,492.73 550.17,492.74 552.00,492.75 553.83,492.76 555.67,492.77 557.50,492.78 559.33,492.79 561.17,492.80 563.00,492.80 564.83,492.81 566.67,492.82 568.50,492.83 570.33,492.84 572.17,492.84 574.00,492.85 575.83,492.86 577.67,492.86 579.50,492.87 581.33,492.88 583.17,492.88 585.00,492.89 586.83,492.90 588.67,492.90 590.50,492.91 592.33,492.91 594.17,492.92 596.00,492.93 597.83,492.93 599.67,492.94 601.50,492.94 603.33,492.95 605.17,492.95 607.00,492.96 608.83,492.96 610.67,492.97 612.50,492.97"/>
<polyline fill="none" stroke="#64d413" stroke-width="1.1" points="62.50,333.11 64.33,339.17 66.17,345.02 68.00,350.69 69.83,356.17 71.67,361.47 73.50,366.59 75.33,371.55 77.17,376.34 79.00,380.98 80.83,385.47 82.67,389.80 84.50,394.00 86.33,398.06 88.17,401.98 90.00,405.78 91.83,409.45 93.67,413.01 95.50,416.44 97.33,419.76 99.17,422.98 101.00,426.09 102.83,429.09 104.67,432.00 106.50,434.81 108.33,437.54 110.17,440.17 112.00,442.71 113.83,445.17 115.67,447.55 117.50,449.86 119.33,452.08 121.17,454.24 123.00,456.32 124.83,458.34 126.67,460.29 128.50,462.17 130.33,464.00 132.17,465.76 134.00,467.47 135.83,469.12 137.67,470.71 139.50,472.26 141.33,473.75 143.17,475.19 145.00,476.59 146.83,477.94 148.67,479.25 150.50,480.51 152.33,481.73 154.17,482.92 156.00,484.06 157.83,485.17 159.67,486.24 161.50,487.27 163.33,488.27 165.17,489.24 167.00,490.18 168.83,491.08 170.67,491.96 172.50,492.81 174.33,493.62 176.17,494.42 178.00,495.18 179.83,495.93 181.67,496.64 183.50,497.34 185.33,498.01 187.17,498.66 189.00,499.28 190.83,499.89 192.67,500.48 194.50,501.05 196.33,501.59 198.17,502.13 200.00,502.64 201.83,503.14 203.67,503.62 205.50,504.08 207.33,504.53 209.17,504.97 211.00,505.39 212.83,505.79 214.67,506.19 216.50,506.57 218.33,506.94 220.17,507.29 222.00,507.64 223.83,507.97 225.67,508.29 227.50,508.60 229.33,508.91 231.17,509.20 233.00,509.48 234.83,509.75 236.67,510.02 238.50,510.27 240.33,510.52 242.17,510.76 244.00,510.99 245.83,511.21 247.67,511.43 249.50,511.64 251.33,511.84 253.17,512.03 255.00,512.22 256.83,512.41 258.67,512.58 260.50,512.75 262.33,512.92 264.17,513.08 266.00,513.23 267.83,513.38 269.67,513.53 271.50,513.67 273.33,513.80 275.17,513.93 277.00,514.06 278.83,514.18 280.67,514.30 282.50,514.42 284.33,514.53 286.17,514.64 288.00,514.74 289.83,514.84 291.67,514.94 293.50,515.03 295.33,515.12 297.17,515.21 299.00,515.29 300.83,515.38 302.67,515.46 304.50,515.53 306.33,515.61 308.17,515.68 310.00,515.75 311.83,515.82 313.67,515.88 315.50,515.94 317.33,516.00 319.17,516.06 321.00,516.12 322.83,516.18 324.67,516.23 326.50,516.28 328.33,516.33 330.17,516.38 332.00,516.42 333.83,516.47 335.67,516.51 337.50,516.56 339.33,516.60 341.17,516.64 343.00,516.67 344.83,516.71 346.67,516.75 348.50,516.78 350.33,516.81 352.17,516.85 354.00,516.88 355.83,516.91 357.67,516.94 359.50,516.97 361.33,516.99 363.17,517.02 365.00,517.05 366.83,517.07 368.67,517.09 370.50,517.12 372.33,517.14 374.17,517.16 376.00,517.18 377.83,517.20 379.67,517.22 381.50,517.24 383.33,517.26 385.17,517.28 387.00,517.29 388.83,517.31 390.67,517.33 392.50,517.34 394.33,517.36 396.17,517.37 398.00,517.39 399.83,517.40 401.67,517.41 403.50,517.43 405.33,517.44 407.17,517.45 409.00,517.46 410.83,517.47 412.67,517.48 414.50,517.49 416.33,517.50 418.17,517.51 420.00,517.52 421.83,517.53 423.67,517.54 425.50,517.55 427.33,517.56 429.17,517.56 431.00,517.57 432.83,517.58 434.67,517.59 436.50,517.59 438.33,517.60 440.17,517.61 442.00,517.61 443.83,517.62 445.67,517.63 447.50,517.63 449.33,517.64 451.17,517.64 453.00,517.65 454.83,517.65 456.67,517.66 458.50,517.66 460.33,517.67 462.17,517.67 464.00,517.68 465.83,517.68 467.67,517.68 469.50,517.69 471.33,517.69 473.17,517.69 475.00,517.70 476.83,517.70 478.67,517.70 480.50,517.71 482.33,517.71 484.17,517.71 486.00,517.72 487.83,517.72 489.67,517.72 491.50,517.72 493.33,517.73 495.17,517.73 497.00,517.73 498.83,517.73 500.67,517.74 502.50,517.74 504.33,517.74 506.17,517.74 508.00,517.74 509.83,517.75 511.67,517.75 513.50,517.75 515.33,517.75 517.17,517.75 519.00,517.75 520.83,517.76 522.67,517.76 524.50,517.76 526.33,517.76 528.17,517.76 530.00,517.76 531.83,517.76 533.67,517.76 535.50,517.77 537.33,517.77 539.17,517.77 541.00,517.77 542.83,517.77 544.67,517.77 546.50,517.77 548.33,517.77 550.17,517.77 552.00,517.77 553.83,517.78 555.67,517.78 557.50,517.78 559.33,517.78 561.17,517.78 563.00,517.78 564.83,517.78 566.67,517.78 568.50,517.78 570.33,517.78 572.17,517.78 574.00,517.78 575.83,517.78 577.67,517.78 579.50,517.78 581.33,517.79 583.17,517.79 585.00,517.79 586.83,517.79 588.67,517.79 590.50,517.79 592.33,517.79 594.17,517.79 596.00,517.79 597.83,517.79 599.67,517.79 601.50,517.79 603.33,517.79 605.17,517.79 607.00,517.79 608.83,517.79 610.67,517.79 612.50,517.79"/>
<polyline fill="none" stroke="#b746ff" stroke-width="1.1" points="62.50,333.11 64.33,339.17 66.17,345.02 68.00,350.69 69.83,356.17 71.67,361.47 73.50,366.59 75.33,371.55 77.17,376.34 79.00,380.98 80.83,385.47 82.67,389.80 84.50,394.00 86.33,398.06 88.17,401.98 90.00,405.78 91.83,409.45 93.67,413.01 95.50,416.44 97.33,419.76 99.17,422.98 101.00,426.09 102.83,429.09 104.67,432.00 106.50,434.81 108.33,437.54 110.17,440.17 112.00,442.71 113.83,445.17 115.67,447.55 117.50,449.86 119.33,452.08 121.17,454.24 123.00,456.32 124.83,458.34 126.67,460.29 128.50,462.17 130.33,464.00 132.17,465.76 134.00,467.47 135.83,469.12 137.67,470.71 139.50,472.26 141.33,473.75 143.17,475.19 145.00,476.59 146.83,477.94 148.67,479.25 150.50,480.51 152.33,481.73 154.17,482.92 156.00,484.06 157.83,485.17 159.67,486.24 161.50,487.27 163.33,488.27 165.17,489.24 167.00,490.18 168.83,491.08 170.67,491.96 172.50,492.81 174.33,493.62 176.17,494.42 178.00,495.18 179.83,495.93 181.67,496.64 183.50,497.34 185.33,498.01 187.17,498.66 189.00,499.28 190.83,499.89 192.67,500.48 194.50,501.05 196.33,501.59 198.17,502.13 200.00,502.64 201.83,503.14 203.67,503.62 205.50,504.08 207.33,504.53 209.17,504.97 211.00,505.39 212.83,505.79 214.67,506.19 216.50,506.57 218.33,506.94 220.17,507.29 222.00,507.64 223.83,507.97 225.67,508.29 227.50,508.60 229.33,508.91 231.17,509.20 233.00,509.48 234.83,509.75 236.67,510.02 238.50,510.27 240.33,510.52 242.17,510.76 244.00,510.99 245.83,511.21 247.67,511.43 249.50,511.64 251.33,511.84 253.17,512.03 255.00,512.22 256.83,512.41 258.67,512.58 260.50,512.75 262.33,512.92 264.17,513.08 266.00,513.23 267.83,513.38 269.67,513.53 271.50,513.67 273.33,513.80 275.17,513.93 277.00,514.06 278.83,514.18 280.67,514.30 282.50,514.42 284.33,514.53 286.17,514.64 288.00,514.74 289.83,514.84 291.67,514.94 293.50,515.03 295.33,515.12 297.17,515.21 299.00,515.29 300.83,515.38 302.67,515.46 304.50,515.53 306.33,515.61 308.17,515.68 310.00,515.75 311.83,515.82 313.67,515.88 315.50,515.94 317.33,516.00 319.17,516.06 321.00,516.12 322.83,516.18 324.67,516.23 326.50,516.28 328.33,516.33 330.17,516.38 332.00,516.42 333.83,516.47 335.67,516.51 337.50,516.56 339.33,516.60 341.17,516.64 343.00,516.67 344.83,516.71 346.67,516.75 348.50,516.78 350.33,516.81 352.17,516.85 354.00,516.88 355.83,516.91 357.67,516.94 359.50,516.97 361.33,516.99 363.17,517.02 365.00,517.05 366.83,517.07 368.67,517.09 370.50,517.12 372.33,517.14 374.17,517.16 376.00,517.18 377.83,517.20 379.67,517.22 381.50,517.24 383.33,517.26 385.17,517.28 387.00,517.29 388.83,517.31 390.67,517.33 392.50,517.34 394.33,517.36 396.17,517.37 398.00,517.39 399.83,517.40 401.67,517.41 403.50,517.43 405.33,517.44 407.17,517.45 409.00,517.46 410.83,517.47 412.67,517.48 414.50,517.49 416.33,517.50 418.17,517.51 420.00,517.52 421.83,517.53 423.67,517.54 425.50,517.55 427.33,517.56 429.17,517.56 431.00,517.57 432.83,517.58 434.67,517.59 436.50,517.59 438.33,517.60 440.17,517.61 442.00,517.61 443.83,517.62 445.67,517.63 447.50,517.63 449.33,517.64 451.17,517.64 453.00,517.65 454.83,517.65 456.67,517.66 458.50,517.66 460.33,517.67 462.17,517.67 464.00,517.68 465.83,517.68 467.67,517.68 469.50,517.69 471.33,517.69 473.17,517.69 475.00,517.70 476.83,517.70 478.67,517.70 480.50,517.71 482.33,517.71 484.17,517.71 486.00,517.72 487.83,517.72 489.67,517.72 491.50,517.72 493.33,517.73 495.17,517.73 497.00,517.73 498.83,517.73 500.67,517.74 502.50,517.74 504.33,517.74 506.17,517.74 508.00,517.74 509.83,517.75 511.67,517.75 513.50,517.75 515.33,517.75 517.17,517.75 519.00,517.75 520.83,517.76 522.67,517.76 524.50,517.76 526.33,517.76 528.17,517.76 530.00,517.76 531.83,517.76 533.67,517.76 535.50,517.77 537.33,517.77 539.17,517.77 541.00,517.77 542.83,517.77 544.67,517.77 546.50,517.77 548.33,517.77 550.17,517.77 552.00,517.77 553.83,517.78 555.67,517.78 557.50,517.78 559.33,517.78 561.17,517.78 563.00,517.78 564.83,517.78 566.67,517.78 568.50,517.78 570.33,517.78 572.17,517.78 574.00,517.78 575.83,517.78 577.67,517.78 579.50,517.78 581.33,517.79 583.17,517.79 585.00,517.79 586.83,517.79 588.67,517.79 590.50,517.79 592.33,517.79 594.17,517.79 596.00,517.79 597.83,517.79 599.67,517.79 601.50,517.79 603.33,517.79 605.17,517.79 607.00,517.79 608.83,517.79 610.67,517.79 612.50,517.79"/>
<polyline fill="none" stroke="#0fffff" stroke-width="1.1" points="62.50,333.11 64.33,339.17 66.17,345.02 68.00,350.69 69.83,356.17 71.67,361.47 73.50,366.59 75.33,371.55 77.17,376.34 79.00,380.98 80.83,385.47 82.67,389.80 84.50,394.00 86.33,398.06 88.17,401.98 90.00,405.78 91.83,409.45 93.67,413.01 95.50,416.44 97.33,419.76 99.17,422.98 101.00,426.09 102.83,429.09 104.67,432.00 106.50,434.81 108.33,437.54 110.17,440.17 112.00,442.71 113.83,445.17 115.67,447.55 117.50,449.86 119.33,452.08 121.17,454.24 123.00,456.32 124.83,458.34 126.67,460.29 128.50,462.17 130.33,464.00 132.17,465.76 134.00,467.47 135.83,469.12 137.67,470.71 139.50,472.26 141.33,473.75 143.17,475.19 145.00,476.59 146.83,477.94 148.67,479.25 150.50,480.51 152.33,481.73 154.17,482.92 156.00,484.06 157.83,485.17 159.67,486.24 161.50,487.27 163.33,488.27 165.17,489.24 167.00,490.18 168.83,491.08 170.67,491.96 172.50,492.81 174.33,493.62 176.17,494.42 178.00,495.18 179.83,495.93 181.67,496.64 183.50,497.34 185.33,498.01 187.17,498.66 189.00,499.28 190.83,499.89 192.67,500.48 194.50,501.05 196.33,501.59 198.17,502.13 200.00,502.64 201.83,503.14 203.67,503.62 205.50,504.08 207.33,504.53 209.17,504.97 211.00,505.39 212.83,505.79 214.67,506.19 216.50,506.57 218.33,506.94 220.17,507.29 222.00,507.64 223.83,507.97 225.67,508.29 227.50,508.60 229.33,508.91 231.17,509.20 233.00,509.48 234.83,509.75 236.67,510.02 238.50,510.27 240.33,510.52 242.17,510.76 244.00,510.99 245.83,511.21 247.67,511.43 249.50,511.64 251.33,511.84 253.17,512.03 255.00,512.22 256.83,512.41 258.67,512.58 260.50,512.75 262.33,512.92 264.17,513.08 266.00,513.23 267.83,513.38 269.67,513.53 271.50,513.67 273.33,513.80 275.17,513.93 277.00,514.06 278.83,514.18 280.67,514.30 282.50,514.42 284.33,514.53 286.17,514.64 288.00,514.74 289.83,514.84 291.67,514.94 293.50,515.03 295.33,515.12 297.17,515.21 299.00,515.29 300.83,515.38 302.67,515.46 304.50,515.53 306.33,515.61 308.17,515.68 310.00,515.75 311.83,515.82 313.67,515.88 315.50,515.94 317.33,516.00 319.17,516.06 321.00,516.12 322.83,516.18 324.67,516.23 326.50,516.28 328.33,516.33 330.17,516.38 332.00,516.42 333.83,516.47 335.67,516.51 337.50,516.56 339.33,516.60 341.17,516.64 343.00,516.67 344.83,516.71 346.67,516.75 348.50,516.78 350.33,516.81 352.17,516.85 354.00,516.88 355.83,516.91 357.67,516.94 359.50,516.97 361.33,516.99 363.17,517.02 365.00,517.05 366.83,517.07 368.67,517.09 370.50,517.12 372.33,517.14 374.17,517.16 376.00,517.18 377.83,517.20 379.67,517.22 381.50,517.24 383.33,517.26 385.17,517.28 387.00,517.29 388.83,517.31 390.67,517.33 392.50,517.34 394.33,517.36 396.17,517.37 398.00,517.39 399.83,517.40 401.67,517.41 403.50,517.43 405.33,517.44 407.17,517.45 409.00,517.46 410.83,517.47 412.67,517.48 414.50,517.49 416.33,517.50 418.17,517.51 420.00,517.52 421.83,517.53 423.67,517.54 425.50,517.55 427.33,517.56 429.17,517.56 431.00,517.57 432.83,517.58 434.67,517.59 436.50,517.59 438.33,517.60 440.17,517.61 442.00,517.61 443.83,517.62 445.67,517.63 447.50,517.63 449.33,517.64 451.17,517.64 453.00,517.65 454.83,517.65 456.67,517.66 458.50,517.66 460.33,517.67 462.17,517.67 464.00,517.68 465.83,517.68 467.67,517.68 469.50,517.69 471.33,517.69 473.17,517.69 475.00,517.70 476.83,517.70 478.67,517.70 480.50,517.71 482.33,517.71 484.17,517.71 486.00,517.72 487.83,517.72 489.67,517.72 491.50,517.72 493.33,517.73 495.17,517.73 497.00,517.73 498.83,517.73 500.67,517.74 502.50,517.74 504.33,517.74 506.17,517.74 508.00,517.74 509.83,517.75 511.67,517.75 513.50,517.75 515.33,517.75 517.17,517.75 519.00,517.75 520.83,517.76 522.67,517.76 524.50,517.76 526.33,517.76 528.17,517.76 530.00,517.76 531.83,517.76 533.67,517.76 535.50,517.77 537.33,517.77 539.17,517.77 541.00,517.77 542.83,517.77 544.67,517.77 546.50,517.77 548.33,517.77 550.17,517.77 552.00,517.77 553.83,517.78 555.67,517.78 557.50,517.78 559.33,517.78 561.17,517.78 563.00,517.78 564.83,517.78 566.67,517.78 568.50,517.78 570.33,517.78 572.17,517.78 574.00,517.78 575.83,517.78 577.67,517.78 579.50,517.78 581.33,517.79 583.17,517.79 585.00,517.79 586.83,517.79 588.67,517.79 590.50,517.79 592.33,517.79 594.17,517.79 596.00,517.79 597.83,517.79 599.67,517.79 601.50,517.79 603.33,517.79 605.17,517.79 607.00,517.79 608.83,517.79 610.67,517.79 612.50,517.79"/></g>
<clipPath id="axclip"><rect x="62" y="310" width="550" height="231"/></clipPath>
<rect x="517.5" y="323.5" width="81" height="98" fill="#000" stroke="#c8c8c8" stroke-width="1"/>
<g font-family="Liberation Sans" font-size="11" fill="#c8c8c8"><line x1="525" y1="333.5" x2="566" y2="333.5" stroke="#ffff11" stroke-width="1.2"/><text x="569" y="337.5">Add4</text><line x1="525" y1="348.5" x2="566" y2="348.5" stroke="#139fff" stroke-width="1.2"/><text x="569" y="352.5">Add5</text><line x1="525" y1="364.5" x2="566" y2="364.5" stroke="#ff6929" stroke-width="1.2"/><text x="569" y="368.5">Add6</text><line x1="525" y1="380.5" x2="566" y2="380.5" stroke="#64d413" stroke-width="1.2"/><text x="569" y="384.5">Add7</text><line x1="525" y1="396.5" x2="566" y2="396.5" stroke="#b746ff" stroke-width="1.2"/><text x="569" y="400.5">Add8</text><line x1="525" y1="411.5" x2="566" y2="411.5" stroke="#0fffff" stroke-width="1.2"/><text x="569" y="415.5">Add9</text></g>
<rect x="612.5" y="302.5" width="12" height="9" fill="#000" stroke="#f4f4f4" stroke-width="1"/>
<rect x="613" y="303.2" width="11" height="1.3" fill="#f4f4f4"/>
<rect x="614.5" y="305.5" width="9" height="5" fill="#151515" stroke="#3a3a3a" stroke-width="1"/>
<path d="M618.5 304.5 V311" stroke="#f4f4f4" stroke-width="1.1"/>
<path d="M616.3 308.6 Q618.5 305.2 620.7 308.6" stroke="#f4f4f4" stroke-width="1.4" fill="none"/>
</svg>
</body></html>
